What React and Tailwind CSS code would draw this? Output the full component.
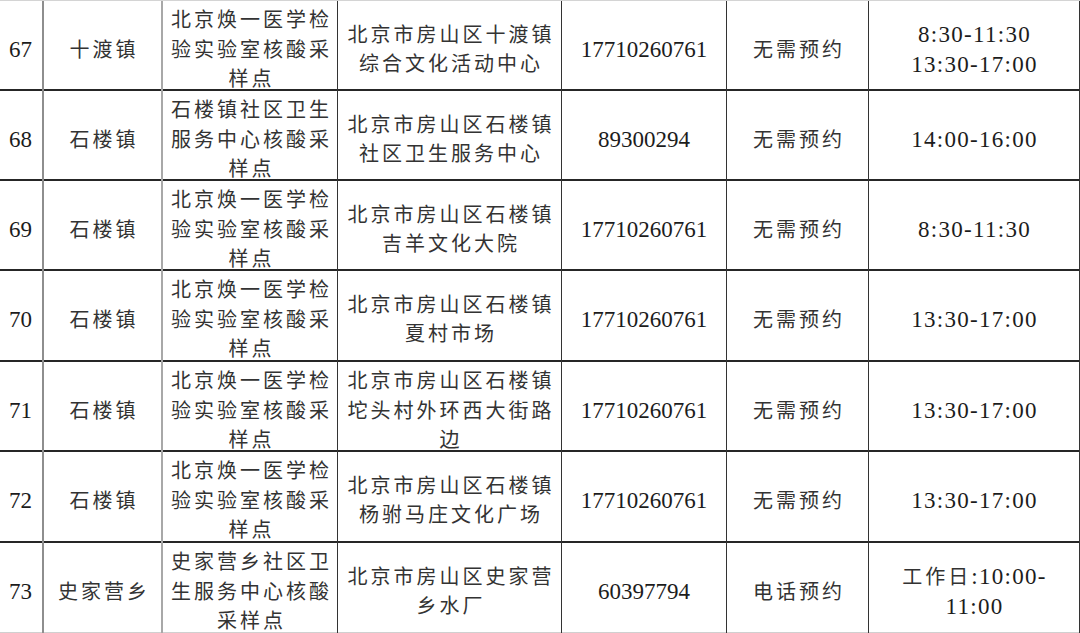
import React from "react";

const site1 = ["北京焕一医学检", "验实验室核酸采", "样点"];

const rows = [
  { n: "67", town: "十渡镇", site: site1, addr: ["北京市房山区十渡镇", "综合文化活动中心"], phone: "17710260761", appt: "无需预约", time: [["8:30-11:30"], ["13:30-17:00"]], h: "h-[90px]" },
  { n: "68", town: "石楼镇", site: ["石楼镇社区卫生", "服务中心核酸采", "样点"], addr: ["北京市房山区石楼镇", "社区卫生服务中心"], phone: "89300294", appt: "无需预约", time: [["14:00-16:00"]], h: "h-[90px]" },
  { n: "69", town: "石楼镇", site: site1, addr: ["北京市房山区石楼镇", "吉羊文化大院"], phone: "17710260761", appt: "无需预约", time: [["8:30-11:30"]], h: "h-[90px]" },
  { n: "70", town: "石楼镇", site: site1, addr: ["北京市房山区石楼镇", "夏村市场"], phone: "17710260761", appt: "无需预约", time: [["13:30-17:00"]], h: "h-[91px]" },
  { n: "71", town: "石楼镇", site: site1, addr: ["北京市房山区石楼镇", "坨头村外环西大街路", "边"], phone: "17710260761", appt: "无需预约", time: [["13:30-17:00"]], h: "h-[90px]" },
  { n: "72", town: "石楼镇", site: site1, addr: ["北京市房山区石楼镇", "杨驸马庄文化广场"], phone: "17710260761", appt: "无需预约", time: [["13:30-17:00"]], h: "h-[91px]" },
  { n: "73", town: "史家营乡", site: ["史家营乡社区卫", "生服务中心核酸", "采样点"], addr: ["北京市房山区史家营", "乡水厂"], phone: "60397794", appt: "电话预约", time: [["工作日", ":10:00-"], ["11:00"]], h: "h-[90px]", last: true },
];

function Zh({ lines }) {
  return (
    <div className="flex flex-col items-center text-[20px] leading-[29.5px] tracking-[3px] pl-[3px] text-[#333]">
      {lines.map((l, i) => (
        <div key={i} className="whitespace-nowrap">{l}</div>
      ))}
    </div>
  );
}

function Num({ text }) {
  return <div className="text-[23px] leading-[30px] whitespace-nowrap">{text}</div>;
}

function Time({ lines }) {
  return (
    <div className="flex flex-col items-center">
      {lines.map((l, i) => (
        <div key={i} className="text-[23px] leading-[30px] whitespace-nowrap tracking-[1.3px] pl-[1px]">
          {l.length === 2 ? (
            <>
              <span className="text-[20px] tracking-[3px] text-[#333]">{l[0]}</span>
              {l[1]}
            </>
          ) : (
            l[0]
          )}
        </div>
      ))}
    </div>
  );
}

const cell = "flex items-center justify-center pt-[5px]";

export default function App() {
  return (
    <div
      className="w-[1080px] h-[633px] bg-white text-[#1c1c1c] overflow-hidden border-t border-[#d4d4d4]"
      style={{ fontFamily: '"Liberation Serif", "Noto Sans CJK SC", serif' }}
    >
      {rows.map((r) => (
        <div
          key={r.n}
          className={`grid grid-cols-[44px_119px_175px_224px_165px_142px_211px] ${r.h} ${
            r.last ? "border-b border-[#d0d0d0]" : "border-b-2 border-[#262626]"
          }`}
        >
          <div className={`${cell} border-r-2 border-[#8e8e8e] pr-[1px]`}>
            <Num text={r.n} />
          </div>
          <div className={`${cell} border-r-2 border-[#a8a8a8]`}>
            <Zh lines={[r.town]} />
          </div>
          <div className={`${cell} border-r border-[#333]`}>
            <Zh lines={r.site} />
          </div>
          <div className={`${cell} border-r border-[#333]`}>
            <Zh lines={r.addr} />
          </div>
          <div className={`${cell} border-r border-[#333]`}>
            <Num text={r.phone} />
          </div>
          <div className={`${cell} border-r border-[#333]`}>
            <Zh lines={[r.appt]} />
          </div>
          <div className={`${cell} border-r border-[#333]`}>
            <Time lines={r.time} />
          </div>
        </div>
      ))}
    </div>
  );
}
